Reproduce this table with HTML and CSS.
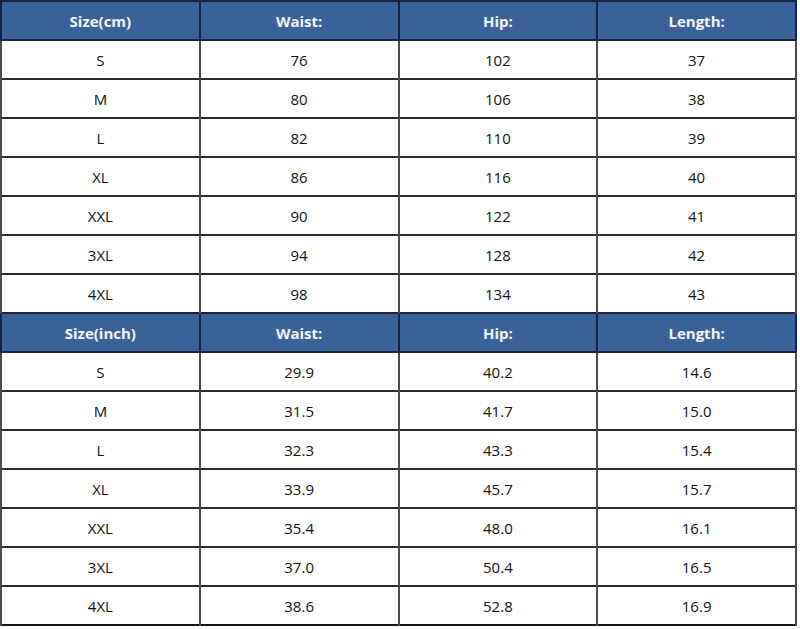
FILE: index.html
```html
<!DOCTYPE html>
<html>
<head>
<meta charset="utf-8">
<link rel="stylesheet" href="styles.css">
</head>
<body>
<table class="chart">
  <colgroup><col class="c"><col class="c"><col class="c"><col class="c"></colgroup>
  <tr class="head"><th>Size(cm)</th><th>Waist:</th><th>Hip:</th><th>Length:</th></tr>
  <tr><td>S</td><td>76</td><td>102</td><td>37</td></tr>
  <tr><td>M</td><td>80</td><td>106</td><td>38</td></tr>
  <tr><td>L</td><td>82</td><td>110</td><td>39</td></tr>
  <tr><td>XL</td><td>86</td><td>116</td><td>40</td></tr>
  <tr><td>XXL</td><td>90</td><td>122</td><td>41</td></tr>
  <tr><td>3XL</td><td>94</td><td>128</td><td>42</td></tr>
  <tr><td>4XL</td><td>98</td><td>134</td><td>43</td></tr>
  <tr class="head"><th>Size(inch)</th><th>Waist:</th><th>Hip:</th><th>Length:</th></tr>
  <tr><td>S</td><td>29.9</td><td>40.2</td><td>14.6</td></tr>
  <tr><td>M</td><td>31.5</td><td>41.7</td><td>15.0</td></tr>
  <tr><td>L</td><td>32.3</td><td>43.3</td><td>15.4</td></tr>
  <tr><td>XL</td><td>33.9</td><td>45.7</td><td>15.7</td></tr>
  <tr><td>XXL</td><td>35.4</td><td>48.0</td><td>16.1</td></tr>
  <tr><td>3XL</td><td>37.0</td><td>50.4</td><td>16.5</td></tr>
  <tr><td>4XL</td><td>38.6</td><td>52.8</td><td>16.9</td></tr>
</table>
</body>
</html>
```
FILE: styles.css
```css
html, body {
  margin: 0;
  padding: 0;
  background: #ffffff;
}
.chart {
  border-collapse: collapse;
  width: 797px;
  table-layout: fixed;
  border: 2px solid #151515;
  font-family: "Open Sans", "Liberation Sans", sans-serif;
  font-size: 15px;
  color: #111111;
}
.chart .c {
  width: 25%;
}
.chart tr {
  height: 39px;
}
.chart td,
.chart th {
  padding: 0;
  text-align: center;
  vertical-align: middle;
  border: 1px solid #3a3a3a;
}
.chart td {
  border-left: 2px solid #4a4a4a;
  border-right: 2px solid #4a4a4a;
  border-top: 2px solid #2a2a2a;
}
.chart .head th {
  background: #3b6298;
  color: #f4f6fb;
  font-weight: 700;
  border: 2px solid #14233f;
}
```
